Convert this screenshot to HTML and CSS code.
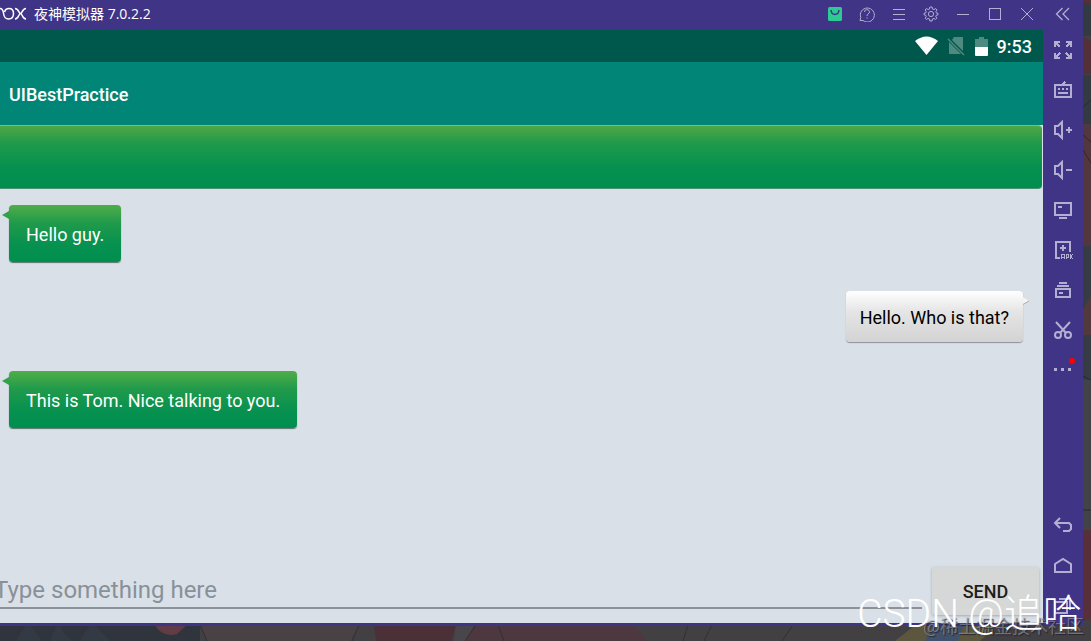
FILE: index.html
```html
<!DOCTYPE html>
<html lang="zh-CN">
<head>
<meta charset="utf-8">
<title>夜神模拟器</title>
<link rel="stylesheet" href="styles.css">
</head>
<body>
<svg class="wallpaper" viewBox="0 0 1091 641" preserveAspectRatio="xMaxYMax slice" aria-hidden="true">
  <rect width="1091" height="641" fill="#434044"/>
  <path d="M0 620H200V641H0z" fill="#30353d"/>
  <path d="M16 641 28 622 42 641zM58 622C62 630 65 636 72 641H50zM92 622 110 641H80z" fill="#343a43"/>
  <path d="M154 624Q162 638 177 634L188 624z" fill="#613c45"/>
  <path d="M199 624H360L350 641H207z" fill="#494144"/>
  <path d="M374 624H456L452 641H376z" fill="#4b3038"/>
  <path d="M475 624H632L648 641H465z" fill="#4d383f"/>
  <path d="M456 624H475L465 641H454z" fill="#48464a"/>
  <path d="M200 625 207 641M359 625 352 641M476 625 465 641M498 625 504 641M688 625 683 641M712 625 704 641M793 625 782 641" stroke="#323035" fill="none"/>
  <path d="M895 641 919 622H1000L980 641z" fill="#5c563f"/>
  <path d="M935 622H965L958 641H925z" fill="#40516a"/>
  <path d="M1083 0H1091V36H1083z" fill="#343a42"/>
  <path d="M1083 0H1091V3H1083zM1083 37 1091 40V74H1083z" fill="#543039"/>
  <path d="M1083 75H1091V124H1083z" fill="#343a42"/>
  <path d="M1083 124H1091V246H1083z" fill="#53363e"/>
  <path d="M1083 246H1091V380H1083z" fill="#373b43"/>
  <path d="M1083 310 1091 295V335H1083z" fill="#52393b"/>
  <path d="M1083 380H1091V530H1083z" fill="#414346"/>
  <path d="M1083 530H1091V620H1083z" fill="#593039"/>
  <path d="M1083 107 1091 100M1083 135 1091 142M1083 150 1091 163M1083 376 1091 380M1083 510H1091" stroke="#292a30"/>
</svg>

<div class="window">
  <header class="titlebar">
    <svg class="logo" width="26" height="14" viewBox="0 0 26 14" role="img" aria-label="nox">
      <path d="M0 1.500C3 1.500 3.300 4 3.600 6.500C4 10 5 12 8.500 12C12.500 12 13.500 9.500 13.500 6.500S12.500 1.500 9 1.500C6 1.500 5 3 4.600 5M15 1.500C19 1.500 18.500 6.500 20.500 6.500S22 1.500 26 1.500M15 12C19 12 18.500 6.500 20.500 6.500S22 12 26 12"/>
    </svg>
    <h1 class="window-title">夜神模拟器 7.0.2.2</h1>
    <nav class="window-tools" aria-label="窗口">
      <button class="tool" aria-label="应用中心"><svg width="16" height="16" viewBox="0 0 16 16"><rect x="1" y="1" width="14" height="14" rx="1.500" fill="#2bcb93" stroke="none"/><path d="M4 4Q4.500 8.500 8 8.500T12 4" stroke="#3f3486" stroke-width="1.500"/></svg></button>
      <button class="tool" aria-label="帮助"><svg width="16" height="16" viewBox="0 0 16 16"><path d="M1 14.500H4A7 7 0 1 0 1.800 11.500zM5.500 6A2.500 2.300 0 1 1 9 8Q8 8.600 8 10M8 11.300V12.500"/></svg></button>
      <button class="tool" aria-label="菜单"><svg class="crisp" width="16" height="16" viewBox="0 0 16 16"><path d="M2 3.500H14M2 8.500H14M2 13.500H14"/></svg></button>
      <button class="tool" aria-label="设置"><svg width="16" height="16" viewBox="0 0 16 16"><path d="M6.900 1H9.100L9.500 3 11 3.600 12.700 2.500 14 4 12.900 5.600 13.400 7 15 7.300V8.800L13.300 9.200 12.800 10.700 13.900 12.200 12.600 13.500 11 12.400 9.500 13 9.100 15H6.900L6.500 13 5 12.400 3.400 13.500 2.100 12.200 3.200 10.700 2.600 9.200 1 8.800V7.300L2.700 7 3.200 5.500 2.100 4 3.400 2.500 5 3.600 6.500 3z"/><circle cx="8" cy="8" r="2.600"/></svg></button>
      <button class="tool" aria-label="最小化"><svg class="crisp" width="16" height="16" viewBox="0 0 16 16"><path d="M2 8.500H14"/></svg></button>
      <button class="tool" aria-label="最大化"><svg class="crisp" width="16" height="16" viewBox="0 0 16 16"><path d="M2.500 2.500H13.500V13.500H2.500z"/></svg></button>
      <button class="tool" aria-label="关闭"><svg width="16" height="16" viewBox="0 0 16 16"><path d="M2 2 14 14M14 2 2 14"/></svg></button>
      <button class="tool tool-wide" aria-label="收起"><svg width="16" height="16" viewBox="0 0 16 16"><path d="M7.500 2 1.500 8 7.500 14M14 2 8 8 14 14" stroke-width="1.300"/></svg></button>
    </nav>
  </header>

  <div class="workspace">
    <main class="phone">
      <div class="statusbar">
        <svg width="24" height="20" viewBox="0 0 24 20"><path d="M0 5Q11.500-4 23 5L11.500 19z" fill="#fff"/></svg>
        <svg class="signal" width="18" height="20" viewBox="0 0 18 20"><path d="M7 1H16V15L5 4zM2 6 14 18H2z" fill="#4f8a81"/><path d="M1 3 17 19" stroke="#4f8a81" stroke-width="1.500"/></svg>
        <svg class="battery" width="13" height="19" viewBox="0 0 13 19"><path d="M4 0H9V2H13V10H0V2H4z" fill="#4f8a81"/><path d="M0 10H13V18Q13 19 12 19H1Q0 19 0 18z" fill="#fff"/></svg>
        <time class="clock">9:53</time>
      </div>
      <div class="appbar"><h2 class="app-title">UIBestPractice</h2></div>
      <div class="banner"></div>
      <section class="messages">
        <p class="bubble received">Hello guy.<svg class="tail" width="7" height="8" viewBox="0 0 7 8"><path d="M0 4 7 0V8z" fill="#32a14b"/></svg></p>
        <p class="bubble sent">Hello. Who is that?<svg class="tail" width="7" height="8" viewBox="0 0 7 8"><path d="M0 0 6 4 0 7z" fill="#f3f3f3"/><path d="M6 4 0 7.500" stroke="#a9adb2"/></svg></p>
        <p class="bubble received">This is Tom. Nice talking to you.<svg class="tail" width="7" height="8" viewBox="0 0 7 8"><path d="M0 4 7 0V8z" fill="#32a14b"/></svg></p>
      </section>
      <form class="composer">
        <input class="message-input" type="text" placeholder="Type something here" aria-label="Type something here">
        <button class="send" type="button">SEND</button>
      </form>
    </main>

    <aside class="sidebar">
      <button class="side" aria-label="全屏"><svg class="crisp" width="20" height="20" viewBox="0 0 20 20"><path d="M2 7V2H7M2 2 7 7M13 2H18V7M18 2 13 7M2 13V18H7M2 18 7 13M18 13V18H13M18 18 13 13"/></svg></button>
      <button class="side" aria-label="键盘"><svg class="crisp" width="20" height="20" viewBox="0 0 20 20"><path d="M2 5H18V17H2zM9 5 12 2M5 9H7M9 9H11M13 9H15M5 13H15"/></svg></button>
      <button class="side" aria-label="音量加"><svg width="20" height="20" viewBox="0 0 20 20"><path d="M2 6H5L9 2V18L5 14H2zM13 10H19M16 7V13"/></svg></button>
      <button class="side" aria-label="音量减"><svg width="20" height="20" viewBox="0 0 20 20"><path d="M2 6H5L9 2V18L5 14H2zM13 10H19"/></svg></button>
      <button class="side" aria-label="屏幕"><svg class="crisp" width="20" height="20" viewBox="0 0 20 20"><path d="M2 3H18V15H2zM5 7H9M6 18H14"/></svg></button>
      <button class="side" aria-label="安装 APK"><svg class="crisp" width="20" height="20" viewBox="0 0 20 20"><path d="M7 18H3V2H17V12M7 8H13M10 5V11"/><path d="M8.500 19V14.500H11.500V19M8.500 17H11.500M13.500 19V14.500H15.500V17H13.500M17.500 14V19M20 14 18 16.500 20 19" stroke-width="1"/></svg></button>
      <button class="side" aria-label="多开"><svg class="crisp" width="20" height="20" viewBox="0 0 20 20"><path d="M6 3H14M4 6H16M3 9H17V17H3zM6 13H10"/></svg></button>
      <button class="side" aria-label="截图"><svg width="20" height="20" viewBox="0 0 20 20"><path d="M3 2 13 13M17 2 7 13"/><circle cx="5" cy="15" r="3"/><circle cx="15" cy="15" r="3"/></svg></button>
      <button class="side" aria-label="更多"><svg class="crisp" width="20" height="20" viewBox="0 0 20 20"><path d="M1 9.500H4M8 9.500H11M15 9.500H18" stroke-width="3"/></svg><span class="dot"></span></button>
      <span class="spacer"></span>
      <button class="side" aria-label="返回"><svg width="20" height="20" viewBox="0 0 20 20"><path d="M7 2 2 7 7 12M2 7H16L18 9V13L16 15H10"/></svg></button>
      <button class="side" aria-label="主页"><svg width="20" height="20" viewBox="0 0 20 20"><path d="M2 16V8L10 3 18 8V16z"/></svg></button>
      <button class="side" aria-label="最近任务"><svg class="crisp" width="20" height="20" viewBox="0 0 20 20"><path d="M2 6H14V17H2zM6 3H17V14"/></svg></button>
    </aside>
  </div>
</div>
<div class="watermark small">@稀土掘金技术社区</div>
<div class="watermark large">CSDN @追哈</div>
</body>
</html>
```
FILE: styles.css
```css
* { box-sizing: border-box; }

body {
  margin: 0;
  height: 100vh;
  padding: 0 8px 15px 0;
  overflow: hidden;
  position: relative;
  background: #434044;
  font-family: Roboto, "Noto Sans CJK SC", sans-serif;
}

h1, h2, p { margin: 0; }

button {
  border: 0;
  padding: 0;
  background: none;
  font-family: inherit;
}

svg { flex: none; }

.crisp { shape-rendering: crispEdges; }

.wallpaper {
  position: absolute;
  inset: 0;
  width: 100%;
  height: 100%;
}

.window {
  position: relative;
  display: flex;
  flex-direction: column;
  height: 100%;
  background: #3f3486;
}

.titlebar {
  display: flex;
  align-items: center;
  height: 30px;
  padding-bottom: 2px;
  flex: none;
}

.logo {
  fill: none;
  stroke: #fff;
  stroke-width: 1.5;
}

.window-title {
  margin-left: 8px;
  color: #fff;
  font: 14px/20px "Open Sans", "Noto Sans CJK SC", sans-serif;
}

.window-tools {
  display: flex;
  margin-left: auto;
}

.tool {
  display: grid;
  place-items: center;
  width: 32px;
  height: 28px;
  fill: none;
  stroke: #b4afd2;
}

.tool-wide { width: 40px; }

.workspace {
  display: flex;
  flex: 1;
  min-height: 0;
}

.phone {
  display: flex;
  flex-direction: column;
  flex: 1;
  min-width: 0;
  margin-bottom: 3px;
  background: #d9e0e8;
}

.statusbar {
  display: flex;
  align-items: center;
  justify-content: flex-end;
  height: 32px;
  padding-right: 11px;
  background: #00574b;
  color: #fff;
}

.signal { margin-left: 8px; }
.battery { margin-left: 10px; }

.clock {
  margin-left: 9px;
  font-size: 18px;
  font-weight: 500;
}

.appbar {
  display: flex;
  align-items: center;
  height: 63px;
  padding: 1px 0 0 9px;
  background: #008577;
}

.app-title {
  color: #fff;
  font-size: 18px;
  font-weight: 500;
}

.banner {
  height: 64px;
  margin-right: 1px;
  border-top: 1px solid #86b68a;
  border-bottom: 1px solid #4f8f76;
  border-radius: 0 4px 4px 0;
  background: linear-gradient(#4ea746, #209a4b 28%, #069150 65%, #008e4e);
}

.messages {
  display: flex;
  flex-direction: column;
  align-items: flex-start;
  flex: 1;
  gap: 29px;
  padding: 16px 20px 0 9px;
}

.bubble {
  position: relative;
  border-radius: 4px;
  font-size: 18px;
  line-height: 24px;
}

.received {
  padding: 18px 17px 15px;
  color: #fff;
  background: linear-gradient(#50ad49, #209a4b 32%, #069150 70%, #008e4e);
  box-shadow: 0 1px 1px #58756d;
}

.sent {
  align-self: flex-end;
  padding: 15px 14px 12px;
  color: #000;
  background: linear-gradient(#fff, #e5e5e5 40%, #d3d3d3);
  box-shadow: 0 1px 1px #8d9196;
}

.tail { position: absolute; }

.received .tail {
  top: 6px;
  right: 100%;
}

.sent .tail {
  top: 6px;
  left: 100%;
}

.composer {
  display: flex;
  align-items: flex-end;
  padding: 0 4px 8px 0;
  gap: 10px;
}

.message-input {
  flex: 1;
  min-width: 0;
  height: 36px;
  margin-bottom: 6px;
  padding: 0;
  border: 0;
  border-bottom: 2px solid #8d9298;
  background: none;
  color: #222;
  font-family: inherit;
  font-size: 24px;
  text-indent: -6px;
  outline: none;
}

.message-input::placeholder { color: #8a9097; }

.send {
  width: 107px;
  height: 48px;
  border-radius: 3px;
  background: #d6d7d7;
  box-shadow: 0 1px 3px #a3a8b0;
  color: #1e1e1e;
  font-size: 18px;
  font-weight: 500;
}

.sidebar {
  display: flex;
  flex-direction: column;
  width: 40px;
}

.side {
  position: relative;
  display: grid;
  place-items: center;
  height: 40px;
  fill: none;
  stroke: #b4afd2;
  stroke-width: 2;
}

.dot {
  position: absolute;
  top: 8px;
  right: 8px;
  width: 6px;
  height: 6px;
  border-radius: 50%;
  background: #f00;
}

.spacer { flex: 1; }

.watermark {
  position: absolute;
  white-space: nowrap;
  pointer-events: none;
}

.watermark.large {
  right: 9px;
  bottom: 3px;
  color: #fff;
  font: 300 39px/48px Roboto, "Noto Sans CJK SC", sans-serif;
}

.watermark.small {
  right: 7px;
  bottom: 4px;
  color: rgba(190, 190, 195, 0.45);
  font: 18px/24px "Noto Sans CJK SC", sans-serif;
  text-shadow: 1px 1px 1px rgba(30, 30, 40, 0.8);
}
```
